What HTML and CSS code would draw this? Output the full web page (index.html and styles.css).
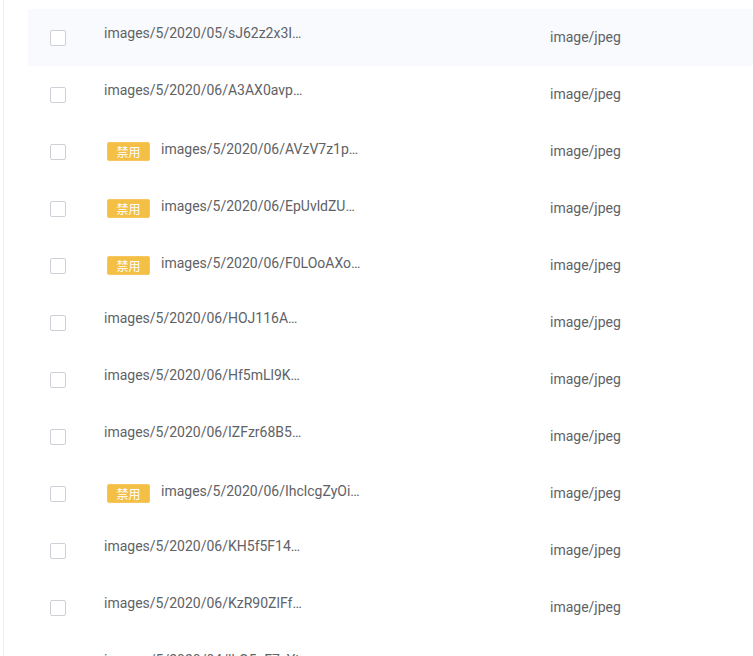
FILE: index.html
```html
<!DOCTYPE html>
<html lang="zh-CN">
<head>
  <meta charset="UTF-8">
  <meta name="viewport" content="width=device-width, initial-scale=1.0">
  <title>文件列表</title>
  <link rel="stylesheet" href="styles.css">
</head>
<body>
  <div class="panel">
    <div class="file-table">
      <div class="row hover">
        <div class="cell-check"><span class="checkbox"></span></div>
        <div class="cell-name"><span class="name">images/5/2020/05/sJ62z2x3I…</span></div>
        <div class="cell-mime">image/jpeg</div>
      </div>
      <div class="row">
        <div class="cell-check"><span class="checkbox"></span></div>
        <div class="cell-name"><span class="name">images/5/2020/06/A3AX0avp…</span></div>
        <div class="cell-mime">image/jpeg</div>
      </div>
      <div class="row">
        <div class="cell-check"><span class="checkbox"></span></div>
        <div class="cell-name"><span class="tag">禁用</span><span class="name tagged">images/5/2020/06/AVzV7z1p…</span></div>
        <div class="cell-mime">image/jpeg</div>
      </div>
      <div class="row">
        <div class="cell-check"><span class="checkbox"></span></div>
        <div class="cell-name"><span class="tag">禁用</span><span class="name tagged">images/5/2020/06/EpUvldZU…</span></div>
        <div class="cell-mime">image/jpeg</div>
      </div>
      <div class="row">
        <div class="cell-check"><span class="checkbox"></span></div>
        <div class="cell-name"><span class="tag">禁用</span><span class="name tagged">images/5/2020/06/F0LOoAXo…</span></div>
        <div class="cell-mime">image/jpeg</div>
      </div>
      <div class="row">
        <div class="cell-check"><span class="checkbox"></span></div>
        <div class="cell-name"><span class="name">images/5/2020/06/HOJ116A…</span></div>
        <div class="cell-mime">image/jpeg</div>
      </div>
      <div class="row">
        <div class="cell-check"><span class="checkbox"></span></div>
        <div class="cell-name"><span class="name">images/5/2020/06/Hf5mLl9K…</span></div>
        <div class="cell-mime">image/jpeg</div>
      </div>
      <div class="row">
        <div class="cell-check"><span class="checkbox"></span></div>
        <div class="cell-name"><span class="name">images/5/2020/06/IZFzr68B5…</span></div>
        <div class="cell-mime">image/jpeg</div>
      </div>
      <div class="row">
        <div class="cell-check"><span class="checkbox"></span></div>
        <div class="cell-name"><span class="tag">禁用</span><span class="name tagged">images/5/2020/06/IhclcgZyOi…</span></div>
        <div class="cell-mime">image/jpeg</div>
      </div>
      <div class="row">
        <div class="cell-check"><span class="checkbox"></span></div>
        <div class="cell-name"><span class="name">images/5/2020/06/KH5f5F14…</span></div>
        <div class="cell-mime">image/jpeg</div>
      </div>
      <div class="row">
        <div class="cell-check"><span class="checkbox"></span></div>
        <div class="cell-name"><span class="name">images/5/2020/06/KzR90ZlFf…</span></div>
        <div class="cell-mime">image/jpeg</div>
      </div>
      <div class="row">
        <div class="cell-check"><span class="checkbox"></span></div>
        <div class="cell-name"><span class="name">images/5/2020/04/lhG5nF7zYt…</span></div>
        <div class="cell-mime">image/jpeg</div>
      </div>
    </div>
  </div>
</body>
</html>
```

FILE: styles.css
```css
html, body {
  margin: 0;
  height: 100%;
  overflow: hidden;
  background: #fff;
}

body {
  font-family: Roboto, "Helvetica Neue", "Noto Sans CJK SC", sans-serif;
  font-size: 14px;
  color: #606266;
}

.panel {
  margin-left: 3px;
  min-height: 100%;
  border-left: 1px solid #ebeef2;
  padding: 9px 0 0 24px;
}

.file-table {
  width: 760px;
}

.row {
  display: flex;
  align-items: center;
  height: 57px;
}

.row.hover {
  background-color: #f8fafd;
}

.cell-check {
  width: 76px;
  flex: none;
  display: flex;
  align-items: center;
  padding-left: 22px;
  box-sizing: border-box;
}

.checkbox {
  width: 14px;
  height: 14px;
  border: 1px solid #cdd1d7;
  border-radius: 2px;
  background: #fff;
}

.cell-name {
  width: 446px;
  flex: none;
  display: flex;
  align-items: center;
  white-space: nowrap;
}

.name {
  line-height: 20px;
  padding-bottom: 10px;
}

.name.tagged {
  padding-bottom: 6px;
}

.tag {
  display: inline-flex;
  align-items: center;
  justify-content: center;
  box-sizing: border-box;
  width: 43px;
  height: 19px;
  margin: 0 11px 0 3px;
  background-color: #f3bf45;
  border: 1px solid #f5c75e;
  border-radius: 2px;
  color: #fff;
  font-size: 12px;
}

.cell-mime {
  flex: 1;
  line-height: 20px;
  padding-bottom: 2px;
}
```
